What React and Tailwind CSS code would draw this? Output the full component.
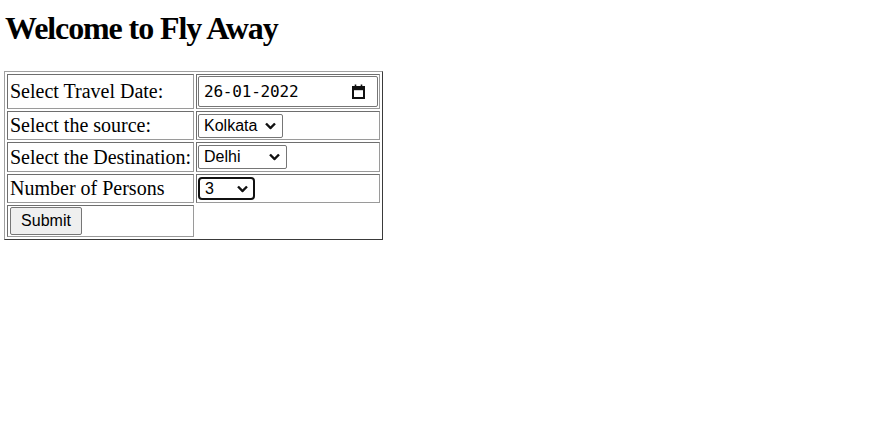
import React, { useState } from 'react';

const CalendarIcon = () => (
  <svg width="13" height="15" viewBox="0 0 13 15" fill="none" stroke="#111" strokeWidth="2">
    <path d="M3.5 0.5v3M9.5 0.5v3" strokeWidth="1.6" />
    <rect x="1" y="3" width="11" height="11" />
    <path d="M1 5h11" strokeWidth="2.4" />
  </svg>
);

const Chevron = () => (
  <svg width="11" height="7" viewBox="0 0 11 7" fill="none" stroke="#111" strokeWidth="2.4">
    <path d="M1 1l4.5 4.5L10 1" />
  </svg>
);

// select with the browser arrow redrawn so it renders the same everywhere
const Dropdown = ({ value, onChange, options, className }) => (
  <div className="relative flex w-fit">
    <select
      value={value}
      onChange={(e) => onChange(e.target.value)}
      className={`appearance-none bg-white pl-[5px] text-[16px] leading-[18px] text-black font-['Liberation_Sans',Arial,sans-serif] outline-none ${className}`}
    >
      {options.map((o) => (
        <option key={o} value={o}>{o}</option>
      ))}
    </select>
    <span className="pointer-events-none absolute right-[7px] top-1/2 -translate-y-1/2 flex">
      <Chevron />
    </span>
  </div>
);

const cell = 'border border-t-[#6e6e6e] border-l-[#6e6e6e] border-b-[#9a9a9a] border-r-[#9a9a9a] p-px';

export default function App() {
  const [source, setSource] = useState('Kolkata');
  const [dest, setDest] = useState('Delhi');
  const [persons, setPersons] = useState('3');

  return (
    <div className="min-h-screen bg-white pl-[4px] pt-[10px] text-black font-['Liberation_Serif','Times_New_Roman',serif]">
      <h1 className="text-[32px] font-bold leading-[37px] tracking-[-1.1px] pl-px">Welcome to Fly Away</h1>

      <table className="mt-[24px] border-separate border-spacing-[2px] border border-t-[#a0a0a0] border-l-[#a0a0a0] border-b-[#3a3a3a] border-r-[#3a3a3a] text-[20px] leading-[23px]">
        <tbody>
          <tr>
            <td className={`${cell} w-[187px] h-[35px] pl-[2px]`}>Select Travel Date:</td>
            <td className={`${cell} w-[184px] h-[35px]`}>
              <div className="flex h-[31px] w-[180px] items-center justify-between border border-[#767676] rounded-[2px] pl-[5px] pr-[12px]">
                <span className="text-[16px] font-['DejaVu_Sans_Mono',monospace] tracking-[-0.2px]">26-01-2022</span>
                <CalendarIcon />
              </div>
            </td>
          </tr>
          <tr>
            <td className={`${cell} h-[29px] pl-[2px]`}>Select the source:</td>
            <td className={`${cell} h-[29px]`}>
              <Dropdown
                value={source}
                onChange={setSource}
                options={['Kolkata', 'Delhi', 'Mumbai', 'Chennai']}
                className="h-[24px] w-[85px] border border-[#767676] rounded-[2px]"
              />
            </td>
          </tr>
          <tr>
            <td className={`${cell} h-[30px] pl-[2px]`}>Select the Destination:</td>
            <td className={`${cell} h-[30px]`}>
              <Dropdown
                value={dest}
                onChange={setDest}
                options={['Delhi', 'Kolkata', 'Mumbai', 'Bangalore']}
                className="h-[24px] w-[89px] border border-[#767676] rounded-[2px]"
              />
            </td>
          </tr>
          <tr>
            <td className={`${cell} h-[29px] pl-[2px]`}>Number of Persons</td>
            <td className={`${cell} h-[29px]`}>
              <Dropdown
                value={persons}
                onChange={setPersons}
                options={['1', '2', '3', '4', '5']}
                className="h-[23px] w-[57px] border-2 border-[#111] rounded-[4px] pl-[4px]"
              />
            </td>
          </tr>
          <tr>
            <td className={`${cell} h-[32px]`}>
              <button
                type="submit"
                className="ml-px block h-[28px] w-[72px] bg-[#efefef] border border-[#767676] rounded-[2px] text-[16px] leading-[18px] font-['Liberation_Sans',Arial,sans-serif]"
              >
                Submit
              </button>
            </td>
          </tr>
        </tbody>
      </table>
    </div>
  );
}
